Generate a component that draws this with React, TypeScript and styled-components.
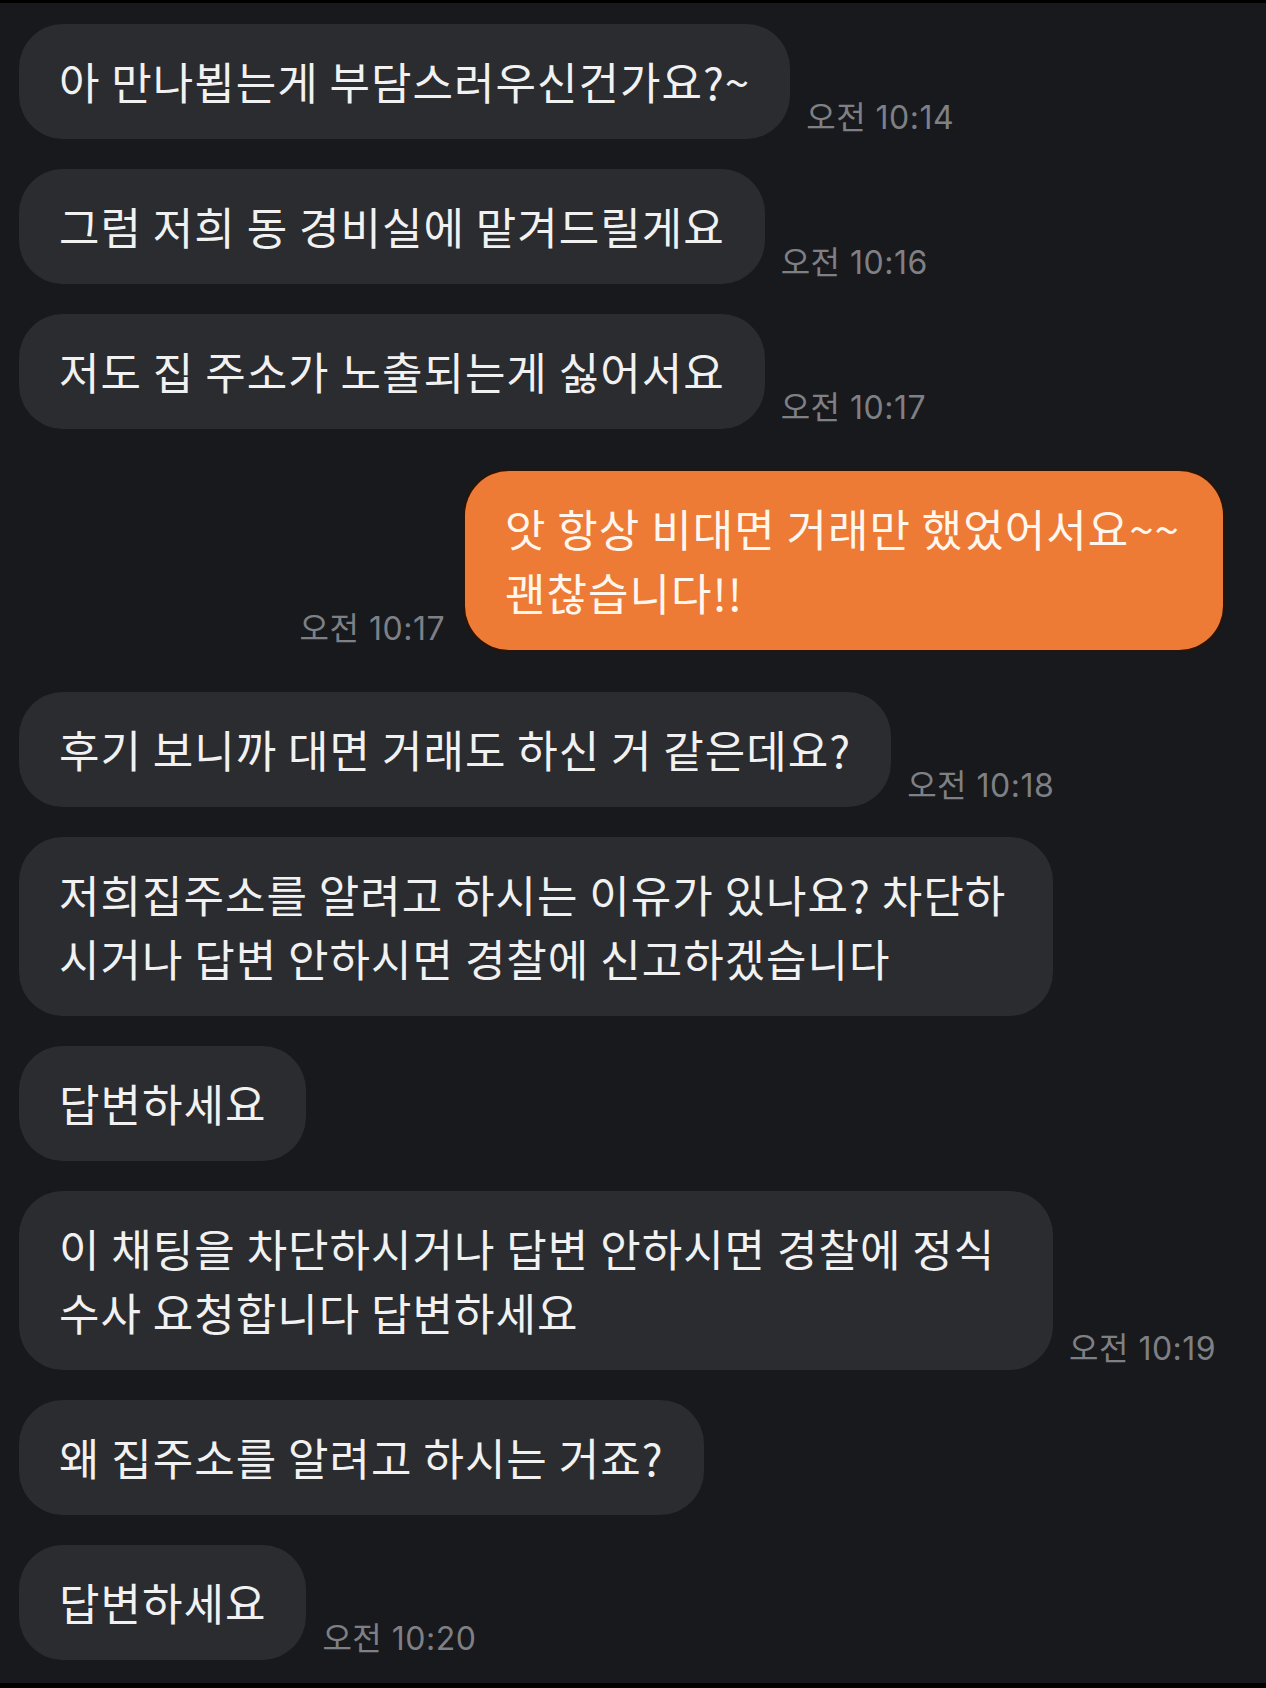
import React from 'react';
import styled, { createGlobalStyle } from 'styled-components';

const GlobalStyle = createGlobalStyle`
  html, body {
    margin: 0;
    padding: 0;
    background: #000;
  }
  body {
    font-family: "Noto Sans CJK KR", "Noto Sans", sans-serif;
  }
`;

const Screen = styled.div`
  margin: 3px 0 5px;
  height: 1680px;
  box-sizing: border-box;
  padding: 21px 43px 0 19px;
  background: #18191c;
  display: flex;
  flex-direction: column;
`;

const Row = styled.div<{ $mine?: boolean; $turn?: boolean }>`
  display: flex;
  flex-direction: ${(p) => (p.$mine ? 'row-reverse' : 'row')};
  align-items: flex-end;
  gap: ${(p) => (p.$mine ? '20px' : '16px')};
  margin-top: ${(p) => (p.$turn ? '42px' : '30px')};
  &:first-child {
    margin-top: 0;
  }
`;

const Bubble = styled.div<{ $mine?: boolean; $wide?: boolean }>`
  box-sizing: border-box;
  width: ${(p) => (p.$wide ? '1034px' : 'auto')};
  padding: ${(p) => (p.$mine ? '25px 43px 26px 40px' : '25px 40px 26px 40px')};
  border-radius: 44px;
  background: ${(p) => (p.$mine ? '#ed7a35' : '#2a2c30')};
  box-shadow: ${(p) => (p.$mine ? '0 0 0 2px #2a1407' : 'none')};
  color: ${(p) => (p.$mine ? '#fff6ee' : '#f1f1f2')};
  font-size: 44px;
  line-height: 64px;
  letter-spacing: 1px;
  white-space: nowrap;
`;

const Time = styled.span`
  font-family: "Inter", "Noto Sans CJK KR", sans-serif;
  font-size: 32px;
  line-height: 32px;
  letter-spacing: 0.5px;
  color: #7f8085;
  margin-bottom: 5px;
  white-space: nowrap;
`;

type Msg = {
  lines: string[];
  time?: string;
  mine?: boolean;
  wide?: boolean;
  turn?: boolean;
};

const messages: Msg[] = [
  { lines: ['아 만나뵙는게 부담스러우신건가요?~'], time: '오전 10:14' },
  { lines: ['그럼 저희 동 경비실에 맡겨드릴게요'], time: '오전 10:16' },
  { lines: ['저도 집 주소가 노출되는게 싫어서요'], time: '오전 10:17' },
  { lines: ['앗 항상 비대면 거래만 했었어서요~~', '괜찮습니다!!'], time: '오전 10:17', mine: true, turn: true },
  { lines: ['후기 보니까 대면 거래도 하신 거 같은데요?'], time: '오전 10:18', turn: true },
  { lines: ['저희집주소를 알려고 하시는 이유가 있나요? 차단하', '시거나 답변 안하시면 경찰에 신고하겠습니다'], wide: true },
  { lines: ['답변하세요'] },
  { lines: ['이 채팅을 차단하시거나 답변 안하시면 경찰에 정식', '수사 요청합니다 답변하세요'], time: '오전 10:19', wide: true },
  { lines: ['왜 집주소를 알려고 하시는 거죠?'] },
  { lines: ['답변하세요'], time: '오전 10:20' },
];

const App = () => {
  return (
    <>
      <GlobalStyle />
      <Screen>
        {messages.map((m, i) => (
          <Row key={i} $mine={m.mine} $turn={m.turn}>
            <Bubble $mine={m.mine} $wide={m.wide}>
              {m.lines.map((l, j) => (
                <div key={j}>{l}</div>
              ))}
            </Bubble>
            {m.time && <Time>{m.time}</Time>}
          </Row>
        ))}
      </Screen>
    </>
  );
};

export default App;
